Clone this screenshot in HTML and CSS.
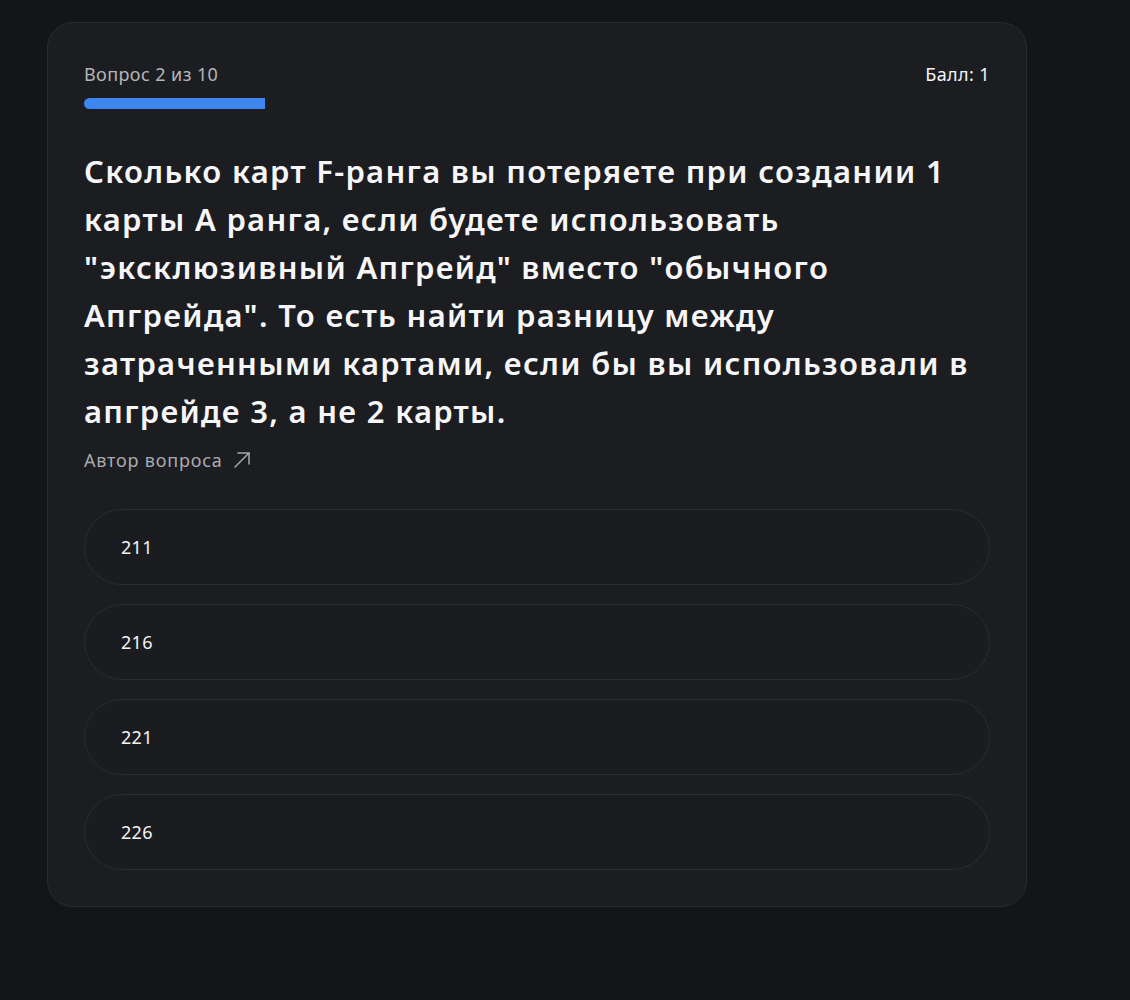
FILE: index.html
```html
<!DOCTYPE html>
<html lang="ru">
<head>
    <meta charset="UTF-8">
    <meta name="viewport" content="width=device-width, initial-scale=1.0">
    <title>Викторина</title>
    <link rel="stylesheet" href="styles.css">
</head>
<body>
    <div class="quiz-card">
        <div class="quiz-head">
            <div class="quiz-counter">Вопрос 2 из 10</div>
            <div class="quiz-score">Балл: 1</div>
        </div>
        <div class="quiz-progress">
            <div class="quiz-progress-fill" style="width: 20%;"></div>
        </div>

        <h2 class="quiz-question">Сколько карт F-ранга вы потеряете при создании 1 карты А ранга, если будете использовать "эксклюзивный Апгрейд" вместо "обычного Апгрейда". То есть найти разницу между затраченными картами, если бы вы использовали в апгрейде 3, а не 2 карты.</h2>

        <a class="quiz-author" href="#">
            Автор вопроса
            <svg width="18" height="18" viewBox="0 0 18 18" fill="none" stroke="currentColor" stroke-width="1.5" stroke-linecap="round" stroke-linejoin="round">
                <path d="M2 16L16 2"/>
                <path d="M5 2h11v11"/>
            </svg>
        </a>

        <div class="quiz-answers">
            <button class="quiz-answer">211</button>
            <button class="quiz-answer">216</button>
            <button class="quiz-answer">221</button>
            <button class="quiz-answer">226</button>
        </div>
    </div>
</body>
</html>
```

FILE: styles.css
```css
body {
    margin: 0;
    padding: 22px 0 0 47px;
    background: #141517;
    font-family: 'Noto Sans', 'Open Sans', sans-serif;
    color: #f2f2f4;
    min-height: 100vh;
    box-sizing: border-box;
}

.quiz-card {
    width: 980px;
    box-sizing: border-box;
    padding: 39px 36px 36px;
    background: #1c1d21;
    border: 1px solid #2a2b30;
    border-radius: 26px;
}

.quiz-head {
    display: flex;
    justify-content: space-between;
    align-items: center;
    font-size: 18px;
    line-height: 24px;
    letter-spacing: 0.4px;
}

.quiz-counter {
    color: #b4b5ba;
}

.quiz-score {
    color: #f4f4f6;
}

.quiz-progress {
    margin-top: 12px;
    height: 11px;
}

.quiz-progress-fill {
    height: 100%;
    background: #3d85ef;
    border-radius: 6px 0 0 6px;
}

.quiz-question {
    margin: 38px 0 0;
    font-size: 31px;
    font-weight: 600;
    line-height: 48px;
    letter-spacing: 1.3px;
    color: #f6f6f8;
}

.quiz-author {
    display: inline-flex;
    align-items: center;
    gap: 10px;
    margin-top: 13px;
    font-size: 18px;
    letter-spacing: 0.8px;
    color: #a9aab0;
    text-decoration: none;
}

.quiz-answers {
    display: flex;
    flex-direction: column;
    gap: 19px;
    margin-top: 37px;
}

.quiz-answer {
    height: 76px;
    padding: 0 36px;
    text-align: left;
    font-family: inherit;
    font-size: 18px;
    letter-spacing: 0.3px;
    color: #f4f4f6;
    background: #1b1c20;
    border: 1px solid #2b2c31;
    border-radius: 38px;
    cursor: pointer;
}
```
